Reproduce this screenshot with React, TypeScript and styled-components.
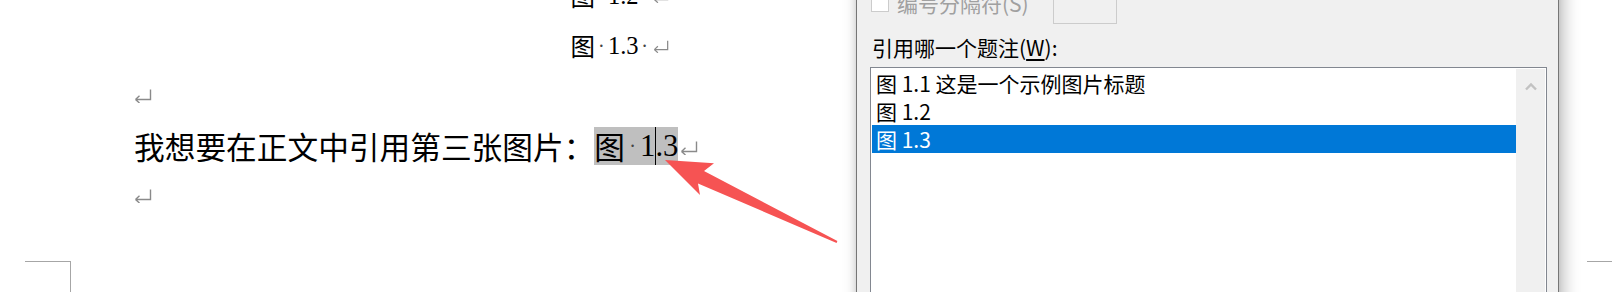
import React from 'react';
import styled, { createGlobalStyle } from 'styled-components';

const GlobalStyle = createGlobalStyle`
	html, body {
		margin: 0;
		padding: 0;
		background: #fff;
	}
	body {
		width: 1612px;
		height: 292px;
		overflow: hidden;
		font-family: "Noto Sans CJK SC", sans-serif;
	}
`;

const Page = styled.div`
	position: relative;
	width: 1612px;
	height: 292px;
	overflow: hidden;
	background: #fff;
	display: flex;
	flex-direction: column;
`;

const Doc = styled.div`
	margin-top: -29px;
	padding-left: 134px;
	width: 971px;
	display: flex;
	flex-direction: column;
`;

const Line = styled.div<{ $center?: boolean }>`
	height: 50px;
	display: flex;
	align-items: center;
	justify-content: ${p => (p.$center ? 'center' : 'flex-start')};
	white-space: nowrap;
`;

const Han = styled.span<{ $size: number }>`
	font-family: "Noto Sans CJK SC", sans-serif;
	font-size: ${p => p.$size}px;
	line-height: 1;
	color: #000;
`;

const Num = styled.span<{ $size: number }>`
	font-family: "Liberation Serif", serif;
	font-size: ${p => p.$size}px;
	line-height: 1;
	color: #000;
`;

const SpaceDot = styled.span<{ $w: number }>`
	display: inline-block;
	width: ${p => p.$w}px;
	text-align: center;
	font-family: "Liberation Serif", serif;
	font-size: 20px;
	line-height: 1;
	color: #444;
`;

const Highlight = styled.span`
	display: inline-flex;
	align-items: center;
	height: 38px;
	background: #bfbfbf;
`;

const Caret = styled.span`
	display: inline-block;
	width: 1px;
	height: 38px;
	margin-right: -1px;
	background: #000;
`;

const Mark = styled.svg<{ $left?: number; $drop?: number }>`
	flex: none;
	margin-left: ${p => p.$left ?? 0}px;
	margin-top: ${p => p.$drop ?? 0}px;
`;

const ReturnMark = ({ w = 18, h = 14, left = 0, drop = 0 }: { w?: number; h?: number; left?: number; drop?: number }) => (
	<Mark width={w} height={h} viewBox="0 0 18 14" $left={left} $drop={drop}>
		<path d="M16.5 0.5 V10.5 H1.5 M1.5 10.5 L5.5 6.8 M1.5 10.5 L5.5 14" fill="none" stroke="#8a8a8a" strokeWidth="1.4" />
	</Mark>
);

const CornerRow = styled.div`
	margin-top: 40px;
	padding-left: 25px;
	display: flex;
	justify-content: space-between;
	height: 31px;
`;

const CornerMark = styled.div<{ $w: number; $side?: boolean }>`
	width: ${p => p.$w}px;
	height: 31px;
	border-top: 1px solid #a6a6a6;
	border-right: ${p => (p.$side ? '1px solid #a6a6a6' : 'none')};
	box-sizing: border-box;
`;

const Arrow = styled.svg`
	position: absolute;
	left: 660px;
	top: 155px;
	pointer-events: none;
`;

const Dialog = styled.div`
	position: absolute;
	left: 856px;
	top: -30px;
	width: 703px;
	height: 420px;
	box-sizing: border-box;
	background: #f0f0f0;
	border: 1px solid #767676;
	box-shadow: 4px 0 16px rgba(0, 0, 0, 0.28), -1px 0 6px rgba(0, 0, 0, 0.08);
	padding: 23px 11px 0 13px;
	display: flex;
	flex-direction: column;
	font-family: "Noto Sans CJK SC", sans-serif;
`;

const OptionRow = styled.div`
	height: 30px;
	display: flex;
	align-items: flex-start;
`;

const CheckBox = styled.span`
	width: 18px;
	height: 18px;
	margin-left: 1px;
	box-sizing: border-box;
	border: 1px solid #cccccc;
	background: #fff;
`;

const OptionText = styled.span<{ $disabled?: boolean }>`
	margin-left: 8px;
	font-size: 21px;
	line-height: 18px;
	color: ${p => (p.$disabled ? '#a0a0a0' : '#000')};
`;

const TextBox = styled.span`
	width: 64px;
	height: 30px;
	margin-left: 24px;
	box-sizing: border-box;
	border: 1px solid #cccccc;
	background: #f0f0f0;
`;

const FieldLabel = styled.div`
	margin-top: 9px;
	padding-left: 2px;
	font-size: 21px;
	line-height: 28px;
	color: #000;
	u {
		text-underline-offset: 3px;
	}
`;

const ListBox = styled.div`
	margin-top: 6px;
	height: 260px;
	border: 1px solid #828790;
	background: #fff;
	padding: 1px;
	display: flex;
`;

const Items = styled.div`
	flex: 1;
	display: flex;
	flex-direction: column;
`;

const Item = styled.div<{ $selected?: boolean }>`
	height: 28px;
	padding-left: 4px;
	font-size: 21px;
	line-height: 28px;
	white-space: nowrap;
	color: ${p => (p.$selected ? '#fff' : '#000')};
	background: ${p => (p.$selected ? '#0078d7' : 'transparent')};
`;

const ScrollBar = styled.div`
	width: 29px;
	background: #f0f0f0;
	display: flex;
	flex-direction: column;
`;

const ScrollButton = styled.div`
	height: 34px;
	display: flex;
	align-items: center;
	justify-content: center;
`;

const captions = [
	{ id: 1, text: '图 1.1 这是一个示例图片标题' },
	{ id: 2, text: '图 1.2' },
	{ id: 3, text: '图 1.3' },
];

const CaptionLine = ({ num }: { num: string }) => (
	<Line $center>
		<Han $size={24.5}>图</Han>
		<SpaceDot $w={13}>·</SpaceDot>
		<Num $size={24.5}>{num}</Num>
		<SpaceDot $w={12}>·</SpaceDot>
		<ReturnMark w={16} h={13} left={2} />
	</Line>
);

const App = () => {
	return (
		<>
			<GlobalStyle />
			<Page>
				<Doc>
					<CaptionLine num="1.2" />
					<CaptionLine num="1.3" />
					<Line>
						<ReturnMark />
					</Line>
					<Line>
						<Han $size={30.7}>我想要在正文中引用第三张图片：</Han>
						<Highlight>
							<Han $size={30.7}>图</Han>
							<SpaceDot $w={15}>·</SpaceDot>
							<Num $size={30.7}>1</Num>
							<Caret />
							<Num $size={30.7}>.3</Num>
						</Highlight>
						<ReturnMark left={2} drop={4} />
					</Line>
					<Line>
						<ReturnMark />
					</Line>
				</Doc>
				<CornerRow>
					<CornerMark $w={46} $side />
					<CornerMark $w={25} />
				</CornerRow>

				<Arrow width="185" height="95" viewBox="0 0 185 95">
					<polygon
						points="5,5 54,8.3 44,16 177.4,86.1 176.6,87.9 38,28.5 40,40"
						fill="#f65353"
					/>
				</Arrow>

				<Dialog>
					<OptionRow>
						<CheckBox />
						<OptionText $disabled>编号分隔符(S)</OptionText>
						<TextBox />
					</OptionRow>
					<FieldLabel>
						引用哪一个题注(<u>W</u>):
					</FieldLabel>
					<ListBox>
						<Items>
							{captions.map(c => (
								<Item key={c.id} $selected={c.id === 3}>
									{c.text}
								</Item>
							))}
						</Items>
						<ScrollBar>
							<ScrollButton>
								<svg width="12" height="10" viewBox="0 0 12 10">
									<path d="M1 8.5 L6 3.5 L11 8.5" fill="none" stroke="#c2c2c2" strokeWidth="2.4" />
								</svg>
							</ScrollButton>
						</ScrollBar>
					</ListBox>
				</Dialog>
			</Page>
		</>
	);
};

export default App;
